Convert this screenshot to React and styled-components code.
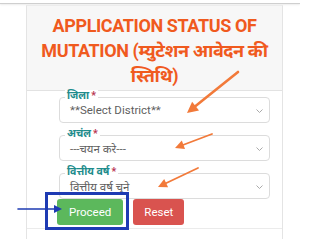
import React from "react";
import styled, { createGlobalStyle } from "styled-components";

const Global = createGlobalStyle`
  html, body { margin: 0; padding: 0; background: #fff; }
  body { font-family: Roboto, "Noto Sans", "Liberation Sans", sans-serif; }
`;

const Page = styled.div`
  position: relative;
  width: 300px;
  height: 239px;
  overflow: hidden;
  background: #fff;
`;

const TopBar = styled.div`
  height: 3px;
  border-bottom: 1px solid #cfcfcf;
  box-shadow: 0 1px 2px rgba(0, 0, 0, 0.08);
`;

const Card = styled.div`
  margin: 1px 0 0 26px;
  width: 257px;
  box-sizing: border-box;
  border-left: 1px solid #e4e4e4;
  border-right: 1px solid #e4e4e4;
  border-top: 1px solid #ececec;
`;

const Header = styled.div`
  background: #f7f7f7;
  border-bottom: 1px solid #e2e2e2;
  padding: 7px 4px 2px;
  text-align: center;
`;

const Title = styled.h2`
  margin: 0;
  font-size: 18px;
  line-height: 25px;
  font-weight: 700;
  letter-spacing: -0.4px;
  color: #f05a1e;
`;

const Body = styled.div`
  padding: 6px 12px 3px 32px;
  border-bottom: 1px solid #ebebeb;
  display: flex;
  flex-direction: column;
  gap: 12px;
`;

const Field = styled.div`
  position: relative;
  height: 26px;
  box-sizing: border-box;
  border: 1px solid #dcdcdc;
  border-radius: 4px;
  display: flex;
  align-items: center;
  justify-content: space-between;
  padding: 0 6px 0 10px;
`;

const Legend = styled.span`
  position: absolute;
  left: 5px;
  top: -8px;
  background: #fff;
  padding: 0 2px;
  font-size: 10.5px;
  line-height: 12px;
  font-weight: 700;
  color: #1e8c8c;
`;

const Req = styled.span`
  color: #b8324f;
  margin-left: 2px;
`;

const Value = styled.span`
  font-size: 11.5px;
  color: #5f5f5f;
`;

const Chevron = styled.svg`
  width: 7px;
  height: 4px;
  margin-top: 1px;
`;

const ButtonRow = styled.div`
  display: flex;
  gap: 10px;
  margin-top: -12px;
  margin-left: -2px;
`;

const Button = styled.button`
  height: 26px;
  padding: 0 ${(p) => p.$px}px;
  border: none;
  border-radius: 3px;
  background: ${(p) => p.$bg};
  color: #fff;
  font-family: Roboto, "Liberation Sans", sans-serif;
  font-size: 11.5px;
  line-height: 26px;
`;

const Footer = styled.div`
  height: 20px;
`;

const Overlay = styled.svg`
  position: absolute;
  left: 0;
  top: 0;
  pointer-events: none;
`;

function Arrow({ x1, y1, x2, y2, color, w = 2, head = 9, hw = 4.5 }) {
  const dx = x2 - x1;
  const dy = y2 - y1;
  const len = Math.hypot(dx, dy);
  const ux = dx / len;
  const uy = dy / len;
  const bx = x2 - ux * head;
  const by = y2 - uy * head;
  const nx = -uy;
  const ny = ux;
  const pts = `${x2},${y2} ${bx + nx * hw},${by + ny * hw} ${bx - nx * hw},${by - ny * hw}`;
  return (
    <g>
      <line x1={x1} y1={y1} x2={bx + ux * 2} y2={by + uy * 2} stroke={color} strokeWidth={w} strokeLinecap="round" />
      <polygon points={pts} fill={color} />
    </g>
  );
}

const fields = [
  { label: "जिला", value: "**Select District**" },
  { label: "अचंल", value: "---चयन करे---" },
  { label: "वित्तीय वर्ष", value: "वित्तीय वर्ष चुने" },
];

export default function App() {
  return (
    <Page>
      <Global />
      <TopBar />
      <Card>
        <Header>
          <Title>APPLICATION STATUS OF MUTATION (म्युटेशन आवेदन की स्तिथि)</Title>
        </Header>
        <Body>
          {fields.map((f) => (
            <Field key={f.label}>
              <Legend>
                {f.label}
                <Req>*</Req>
              </Legend>
              <Value>{f.value}</Value>
              <Chevron viewBox="0 0 7 4">
                <path d="M0.5 0.5 L3.5 3.5 L6.5 0.5" fill="none" stroke="#a0a0a0" strokeWidth="0.9" />
              </Chevron>
            </Field>
          ))}
          <ButtonRow>
            <Button $bg="#5cb85c" $px={12}>Proceed</Button>
            <Button $bg="#d9534f" $px={11}>Reset</Button>
          </ButtonRow>
        </Body>
        <Footer />
      </Card>
      <Overlay width="300" height="239" viewBox="0 0 300 239">
        <Arrow x1={238} y1={72} x2={187} y2={113} color="#f27a3a" w={2.6} head={11} hw={5.5} />
        <Arrow x1={212} y1={134} x2={175} y2={148} color="#f27a3a" w={1.8} head={9} hw={4.5} />
        <Arrow x1={198} y1={168} x2={158} y2={187} color="#f27a3a" w={1.8} head={9} hw={4.5} />
        <rect x="46.5" y="193.5" width="81" height="35" fill="none" stroke="#1e3bb3" strokeWidth="3" />
        <Arrow x1={18} y1={209} x2={62} y2={209} color="#1e3bb3" w={1.6} head={8} hw={4} />
      </Overlay>
    </Page>
  );
}
